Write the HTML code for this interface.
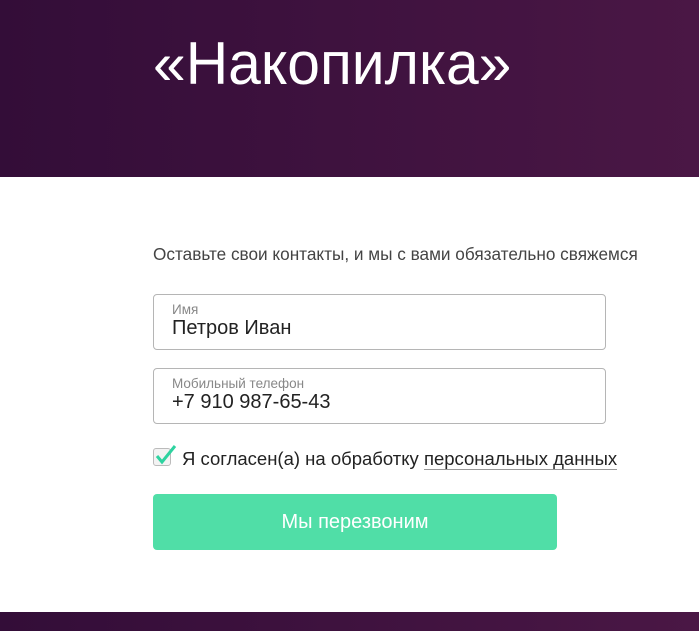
<!DOCTYPE html>
<html><head><meta charset="utf-8"><style>
html,body{margin:0;padding:0;width:699px;height:631px;overflow:hidden;background:#fff;font-family:"Liberation Sans",sans-serif;}
.hdr{position:absolute;left:0;top:0;width:699px;height:177px;background:linear-gradient(90deg,#330d38,#4a1745);}
.title{position:absolute;left:153px;top:29px;color:#fff;font-size:60px;font-weight:300;line-height:70px;transform:scaleX(0.98);transform-origin:left;white-space:nowrap;}
.sub{position:absolute;left:153px;top:244px;font-size:17.2px;color:#444;white-space:nowrap;}
.inp{position:absolute;left:153px;width:451px;height:54px;border:1px solid #b5b5b5;border-radius:4px;}
.lbl{position:absolute;left:18px;top:7px;font-size:13.5px;color:#888;}
.val{position:absolute;left:18px;top:22px;font-size:20px;color:#222;}
.chk{position:absolute;left:153px;top:448px;width:16px;height:16px;border:1px solid #bbb;border-radius:3px;background:#f3f3f3;}
.agree{position:absolute;left:182px;top:448px;font-size:18.5px;color:#222;white-space:nowrap;}
.agree span{border-bottom:1px solid #999;}
.btn{position:absolute;left:153px;top:494px;width:404px;height:56px;background:#50dea7;border-radius:4px;color:#fff;font-size:20px;text-align:center;line-height:56px;}
.ftr{position:absolute;left:0;top:612px;width:699px;height:19px;background:linear-gradient(90deg,#330d38,#4a1745);}
</style></head><body>
<div class="hdr"><div class="title">«Накопилка»</div></div>
<div class="sub">Оставьте свои контакты, и мы с вами обязательно свяжемся</div>
<div class="inp" style="top:294px"><div class="lbl">Имя</div><div class="val">Петров Иван</div></div>
<div class="inp" style="top:368px"><div class="lbl">Мобильный телефон</div><div class="val">+7 910 987-65-43</div></div>
<div class="chk"></div>
<svg style="position:absolute;left:154px;top:444px" width="24" height="22" viewBox="0 0 24 22"><path d="M3 12 L8 18 L21 2" fill="none" stroke="#2ed3a0" stroke-width="3"/></svg>
<div class="agree">Я согласен(а) на обработку <span>персональных данных</span></div>
<div class="btn">Мы перезвоним</div>
<div class="ftr"></div>
</body></html>
